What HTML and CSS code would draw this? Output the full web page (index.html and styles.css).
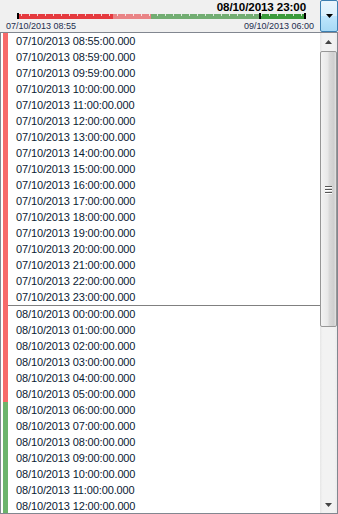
FILE: index.html
```html
<!DOCTYPE html>
<html lang="en">
<head>
  <meta charset="UTF-8">
  <title>Time picker</title>
  <link rel="stylesheet" href="styles.css">
</head>
<body>
  <div class="picker">
    <div class="header">
      <div class="timeline">
        <div class="current">08/10/2013 23:00</div>
        <div class="track">
          <span class="tick"></span>
          <span class="seg seg-red"></span>
          <span class="seg seg-pink"></span>
          <span class="seg seg-green"></span>
          <span class="tick"></span>
          <span class="seg seg-dark"></span>
          <span class="tick"></span>
        </div>
        <div class="range">
          <span>07/10/2013 08:55</span>
          <span>09/10/2013 06:00</span>
        </div>
      </div>
      <div class="drop-btn">
        <svg width="7" height="4" viewBox="0 0 7 4"><path d="M0 0h7L3.5 4z" fill="#000"/></svg>
      </div>
    </div>

    <div class="list">
      <div class="rows">
        <div class="row red"><span class="mark"></span><span class="label">07/10/2013 08:55:00.000</span></div>
        <div class="row red"><span class="mark"></span><span class="label">07/10/2013 08:59:00.000</span></div>
        <div class="row red"><span class="mark"></span><span class="label">07/10/2013 09:59:00.000</span></div>
        <div class="row red"><span class="mark"></span><span class="label">07/10/2013 10:00:00.000</span></div>
        <div class="row red"><span class="mark"></span><span class="label">07/10/2013 11:00:00.000</span></div>
        <div class="row red"><span class="mark"></span><span class="label">07/10/2013 12:00:00.000</span></div>
        <div class="row red"><span class="mark"></span><span class="label">07/10/2013 13:00:00.000</span></div>
        <div class="row red"><span class="mark"></span><span class="label">07/10/2013 14:00:00.000</span></div>
        <div class="row red"><span class="mark"></span><span class="label">07/10/2013 15:00:00.000</span></div>
        <div class="row red"><span class="mark"></span><span class="label">07/10/2013 16:00:00.000</span></div>
        <div class="row red"><span class="mark"></span><span class="label">07/10/2013 17:00:00.000</span></div>
        <div class="row red"><span class="mark"></span><span class="label">07/10/2013 18:00:00.000</span></div>
        <div class="row red"><span class="mark"></span><span class="label">07/10/2013 19:00:00.000</span></div>
        <div class="row red"><span class="mark"></span><span class="label">07/10/2013 20:00:00.000</span></div>
        <div class="row red"><span class="mark"></span><span class="label">07/10/2013 21:00:00.000</span></div>
        <div class="row red"><span class="mark"></span><span class="label">07/10/2013 22:00:00.000</span></div>
        <div class="row red day-end"><span class="mark"></span><span class="label">07/10/2013 23:00:00.000</span></div>
        <div class="row red"><span class="mark"></span><span class="label">08/10/2013 00:00:00.000</span></div>
        <div class="row red"><span class="mark"></span><span class="label">08/10/2013 01:00:00.000</span></div>
        <div class="row red"><span class="mark"></span><span class="label">08/10/2013 02:00:00.000</span></div>
        <div class="row red"><span class="mark"></span><span class="label">08/10/2013 03:00:00.000</span></div>
        <div class="row red"><span class="mark"></span><span class="label">08/10/2013 04:00:00.000</span></div>
        <div class="row red"><span class="mark"></span><span class="label">08/10/2013 05:00:00.000</span></div>
        <div class="row green"><span class="mark"></span><span class="label">08/10/2013 06:00:00.000</span></div>
        <div class="row green"><span class="mark"></span><span class="label">08/10/2013 07:00:00.000</span></div>
        <div class="row green"><span class="mark"></span><span class="label">08/10/2013 08:00:00.000</span></div>
        <div class="row green"><span class="mark"></span><span class="label">08/10/2013 09:00:00.000</span></div>
        <div class="row green"><span class="mark"></span><span class="label">08/10/2013 10:00:00.000</span></div>
        <div class="row green"><span class="mark"></span><span class="label">08/10/2013 11:00:00.000</span></div>
        <div class="row green"><span class="mark"></span><span class="label">08/10/2013 12:00:00.000</span></div>
      </div>

      <div class="scrollbar">
        <div class="sb-btn">
          <svg width="7" height="4" viewBox="0 0 7 4"><path d="M3.5 0L7 4H0z" fill="#444"/></svg>
        </div>
        <div class="sb-track">
          <div class="thumb">
            <span class="grip"></span>
            <span class="grip"></span>
            <span class="grip"></span>
          </div>
        </div>
        <div class="sb-btn">
          <svg width="7" height="4" viewBox="0 0 7 4"><path d="M0 0h7L3.5 4z" fill="#444"/></svg>
        </div>
      </div>
    </div>
  </div>
</body>
</html>
```

FILE: styles.css
```css
:root {
  --face: #f0f0f0;
  --list-border: #828790;
  --red: #e53a3f;
  --pink: #e98486;
  --green: #72ad72;
  --dark-green: #3b9a3b;
  --mark-red: #f76a6a;
  --mark-green: #6cb46c;
  --label: #1d2e4f;
}

* {
  margin: 0;
  padding: 0;
  box-sizing: border-box;
}

body {
  font-family: "Liberation Sans", Arial, sans-serif;
  background: var(--face);
  color: #000;
}

.picker {
  display: flex;
  flex-direction: column;
  width: 338px;
  height: 514px;
}

/* Header with the timeline */
.header {
  display: flex;
  height: 32px;
  flex-shrink: 0;
}

.timeline {
  flex: 1;
  display: flex;
  flex-direction: column;
  padding: 0 6px;
}

.current {
  font-weight: 700;
  font-size: 11.6px;
  line-height: 13px;
  text-align: right;
  padding-right: 8px;
  letter-spacing: -0.1px;
}

.track {
  display: flex;
  align-items: flex-end;
  height: 6px;
  margin: 0 8px 0 11px;
  position: relative;
}

.track::after {
  content: "";
  position: absolute;
  left: 2px;
  right: 2px;
  top: 1px;
  height: 2px;
  background: repeating-linear-gradient(90deg, transparent 0, transparent 2px, rgba(255, 255, 255, 0.75) 2px, rgba(255, 255, 255, 0.75) 3px, transparent 3px, transparent 8px);
}

.tick {
  width: 2px;
  height: 6px;
  background: #000;
}

.seg {
  height: 5px;
}

.seg-red { width: 94px; background: var(--red); }
.seg-pink { width: 38px; background: var(--pink); }
.seg-green { width: 108px; background: var(--green); }
.seg-dark { width: 43px; background: var(--dark-green); }

.range {
  display: flex;
  justify-content: space-between;
  margin-top: 2px;
  font-size: 9px;
  line-height: 11px;
  color: var(--label);
}

.drop-btn {
  width: 18px;
  height: 32px;
  border: 1px solid #3c7fb1;
  border-radius: 2px;
  background: linear-gradient(#eaf6fd, #d9f0fc 50%, #bee6fd 50%, #a7d9f5);
  display: flex;
  align-items: center;
  justify-content: center;
}

/* List */
.list {
  flex: 1;
  display: flex;
  min-height: 0;
  background: #fff;
  border: 1px solid var(--list-border);
}

.rows {
  flex: 1;
  overflow: hidden;
}

.row {
  display: flex;
  height: 16px;
  font-size: 11px;
  line-height: 16px;
  color: #0a1a33;
}

.mark {
  width: 5px;
  margin-left: 2px;
  flex-shrink: 0;
}

.row.red .mark { background: var(--mark-red); }
.row.green .mark { background: var(--mark-green); }

.label {
  flex: 1;
  padding-left: 8px;
  white-space: nowrap;
  letter-spacing: -0.13px;
}

.row.day-end {
  height: 17px;
}

.row.day-end .label {
  border-bottom: 1px solid #808080;
}

/* Scrollbar */
.scrollbar {
  width: 17px;
  display: flex;
  flex-direction: column;
  background: linear-gradient(90deg, #e6e6e6, #f2f2f2 15%, #f2f2f2 85%, #ebebeb);
}

.sb-btn {
  height: 17px;
  display: flex;
  align-items: center;
  justify-content: center;
}

.sb-track {
  flex: 1;
  padding: 1px 0;
}

.thumb {
  height: 276px;
  border: 1px solid #979797;
  border-radius: 2px;
  background: linear-gradient(90deg, #f3f3f3, #e8e8e8 45%, #dadada 55%, #cfcfcf 85%, #e2e2e2);
  display: flex;
  flex-direction: column;
  align-items: center;
  justify-content: center;
  gap: 2px;
}

.grip {
  width: 7px;
  height: 1px;
  background: #555;
  box-shadow: 0 1px 0 #fff;
}
```
